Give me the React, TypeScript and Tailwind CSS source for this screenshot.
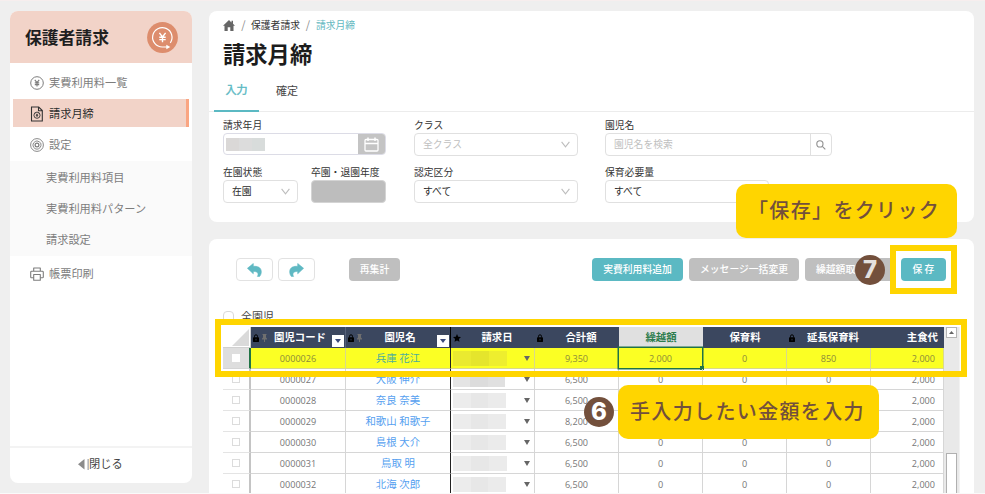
import type { ReactNode } from 'react';
import clsx from 'clsx';

interface Row {
  code: string;
  name: string;
  total: string;
  carry?: string;
  care?: string;
  extended?: string;
  mosaic: string[];
  mosaicWidth: string;
}

const GRAYS = ['bg-[#ececec]', 'bg-[#e7e7e7]', 'bg-[#ebebeb]'];

const ROWS: Row[] = [
  { code: '0000026', name: '兵庫 花江', total: '9,350', carry: '2,000', care: '0', extended: '850', mosaic: ['bg-[#eaea30]', 'bg-[#e5e52c]', 'bg-[#eeee2e]'], mosaicWidth: 'w-[54px]' },
  { code: '0000027', name: '大阪 伸介', total: '6,500', carry: '0', care: '0', extended: '0', mosaic: ['bg-[#e4e4e4]', 'bg-[#dcdcdc]', 'bg-[#e0e0e0]'], mosaicWidth: 'w-[52px]' },
  { code: '0000028', name: '奈良 奈美', total: '6,500', mosaic: GRAYS, mosaicWidth: 'w-[53px]' },
  { code: '0000029', name: '和歌山 和歌子', total: '8,200', mosaic: GRAYS, mosaicWidth: 'w-[53px]' },
  { code: '0000030', name: '島根 大介', total: '6,500', carry: '0', care: '0', extended: '0', mosaic: GRAYS, mosaicWidth: 'w-[53px]' },
  { code: '0000031', name: '鳥取 明', total: '6,500', carry: '0', care: '0', extended: '0', mosaic: GRAYS, mosaicWidth: 'w-[54px]' },
  { code: '0000032', name: '北海 次郎', total: '6,500', carry: '0', care: '0', extended: '0', mosaic: GRAYS, mosaicWidth: 'w-[53px]' },
];

const COLS = 'grid grid-cols-[28px_95px_105px_84px_84px_84px_84px_84px_73px]';

function YenIcon() {
  return (
    <svg width="14" height="14" viewBox="0 0 14 14" fill="none" stroke="#7d7d7d" strokeWidth="1">
      <circle cx="7" cy="7" r="6.3" />
      <path d="M4.8 3.8 7 6.7l2.2-2.9M7 6.7v3.8M4.8 6.9h4.4M4.8 8.6h4.4" strokeWidth="1.1" />
    </svg>
  );
}

function BillIcon() {
  return (
    <svg width="14" height="16" viewBox="0 0 14 16" fill="none" stroke="#333" strokeWidth="1.1">
      <path d="M1.5 1h7.2L12.3 4.6V15H1.5zM8.5 1v3.8h3.8" />
      <circle cx="7" cy="9.2" r="3.1" strokeWidth="0.9" />
      <path d="M5.8 7.5 7 9l1.2-1.5M7 9v2M5.8 9.6h2.4" strokeWidth="0.8" />
    </svg>
  );
}

function SettingIcon() {
  return (
    <svg width="14" height="14" viewBox="0 0 14 14" fill="none" stroke="#7d7d7d">
      <circle cx="7" cy="7" r="6.4" strokeWidth="0.9" />
      <path d="m7 2.9 2.2.9 1.6 1.4.2 2.3-.8 2-1.7 1.3L7 11.2l-1.9-.5-1.5-1.4L2.9 7l.7-2.1 1.6-1.4z" strokeWidth="0.9" />
      <circle cx="7" cy="7" r="1.9" strokeWidth="1.2" />
    </svg>
  );
}

function PrintIcon() {
  return (
    <svg width="14" height="14" viewBox="0 0 14 14" fill="none" stroke="#7d7d7d" strokeWidth="1.1" strokeLinejoin="round">
      <path d="M3.7 4.3V1h6.6v3.3M3.7 10.8H1.6a.9.9 0 0 1-.9-.9V5.2c0-.5.4-.9.9-.9h10.8c.5 0 .9.4.9.9v4.7c0 .5-.4.9-.9.9h-2.1" />
      <path d="M3.7 7.5h6.6v5.8H3.7z" />
    </svg>
  );
}

function HeaderLogo() {
  return (
    <svg width="31" height="31" viewBox="0 0 31 31" fill="none">
      <circle cx="15.5" cy="15.5" r="15.4" fill="#dd8d6d" />
      <path d="M20.5 25H15.300a9.700 9.700 0 1 1 8-4.200" stroke="#fff" strokeWidth="1.2" />
      <path d="m19.3 22.8 4 2.2-4 2.2z" fill="#fff" />
      <path d="M12.4 10.8 15.5 15l3.1-4.2M15.5 15v5.2M12.3 15.3h6.4M12.3 17.6h6.4" stroke="#fff" strokeWidth="1.4" />
    </svg>
  );
}

function LockIcon() {
  return (
    <svg width="6" height="8" viewBox="0 0 6 8" className="shrink-0">
      <path d="M1.5 3.5V2.3a1.5 1.5 0 0 1 3 0v1.2" fill="none" stroke="#000" strokeWidth="1" />
      <rect x="0" y="3.3" width="6" height="4.7" rx="0.4" fill="#000" />
      <rect x="2.6" y="4.8" width="0.8" height="1.6" fill="#3b475f" />
    </svg>
  );
}

function PinIcon() {
  return (
    <svg width="5" height="8" viewBox="0 0 5 8" className="shrink-0" fill="#6f6f6f">
      <path d="M.5 0h4v1h-.5v2.600l1 1v.9H3v2.500H2V5.500H0v-.9l1-1V1H.5z" />
    </svg>
  );
}

function Chevron() {
  return (
    <svg width="9" height="7" viewBox="0 0 9 7" fill="none" stroke="#bdbdbd" strokeWidth="1.1">
      <path d="M.6.8 4.5 5.8 8.4.8" />
    </svg>
  );
}

function UndoArrow({ flip }: { flip?: boolean }) {
  return (
    <svg width="15" height="14" viewBox="0 0 15 14" className={clsx('mt-px', flip && '-scale-x-100')}>
      <path
        d="M.4 5.3 6.3.5v2.800h1.500c4 0 6.500 2.100 6.500 5.500 0 1.800-.6 3.400-1.700 4.600h-2.200c.9-1.300.9-3.100-.2-4-.8-.7-2-.9-3.900-.9v2.300z"
        fill="#5fb9c3"
        stroke="#5fb9c3"
        strokeWidth="0.6"
        strokeLinejoin="round"
      />
    </svg>
  );
}

function NavItem({ icon, label }: { icon: ReactNode; label: string }) {
  return (
    <div className="flex h-[30px] items-center pl-5 text-[11.2px] text-[#7d7d7d]">
      <span className="flex w-[19px]">{icon}</span>
      {label}
    </div>
  );
}

function Sidebar() {
  return (
    <aside className="flex h-[472px] w-[182px] shrink-0 flex-col overflow-hidden rounded-lg bg-white">
      <div className="flex h-[52px] shrink-0 items-center justify-between bg-[#f2d3c8] pr-[14px] pl-[15px]">
        <span className="text-[16.8px] font-bold text-[#1f1f1f]">保護者請求</span>
        <HeaderLogo />
      </div>
      <nav className="flex grow flex-col pt-[5px]">
        <NavItem icon={<YenIcon />} label="実費利用料一覧" />
        <div className="mx-[3px] mt-px flex h-[28px] items-center border-r-[3px] border-[#faa582] bg-[#f2d3c8] pt-px pl-[17px] text-[11.2px] text-[#2c2c2c]">
          <span className="flex w-[19px]"><BillIcon /></span>
          請求月締
        </div>
        <div className="mt-[3px] mb-px">
          <NavItem icon={<SettingIcon />} label="設定" />
        </div>
        <div className="flex h-[95px] flex-col bg-[#fafafa] pt-px pl-9 text-[11.2px] text-[#7d7d7d]">
          <div className="flex h-[31px] items-center">実費利用料項目</div>
          <div className="flex h-[31px] items-center">実費利用料パターン</div>
          <div className="flex h-[31px] items-center">請求設定</div>
        </div>
        <div className="mt-[3px]">
          <NavItem icon={<PrintIcon />} label="帳票印刷" />
        </div>
      </nav>
      <div className="flex h-[37px] items-center border-t-2 border-[#f3f3f3] pb-[3px] pl-[68px] text-[11.2px] text-[#444]">
        <svg width="11" height="11" viewBox="0 0 11 11">
          <path d="M6.5 0v10.6L0 5.3z" fill="#8b8b8b" />
          <path d="M9.5 0h1.3v11H9.5z" fill="#a8a8a8" />
        </svg>
        閉じる
      </div>
    </aside>
  );
}

function Field({ label, className, children }: { label: string; className: string; children: ReactNode }) {
  return (
    <div className={clsx('flex shrink-0 flex-col', className)}>
      <div className="flex h-[15px] items-center text-[9.8px] whitespace-nowrap text-[#333]">{label}</div>
      {children}
    </div>
  );
}

function Select({ value, muted }: { value: string; muted?: boolean }) {
  return (
    <div className={clsx('flex h-[23px] items-center justify-between rounded border border-[#e0e0e0] pr-[7px] pl-2 text-[9.8px]', muted ? 'text-[#bfbfbf]' : 'text-[#2c2c2c]')}>
      <span>{value}</span>
      <Chevron />
    </div>
  );
}

function FilterCard() {
  return (
    <section className="h-[211px] shrink-0 rounded-lg bg-white">
      <div className="flex h-[28px] items-center pt-px pl-[14px] text-[9.8px]">
        <svg width="12" height="11" viewBox="0 0 12 11" fill="#666">
          <path d="M6 0 0 5.8h1.500V11h3.200V7.300h2.600V11h3.200V5.800H12l-2-2V.8H8.500v1.600z" />
        </svg>
        <span className="w-[17px] pb-[2px] text-center text-[11px] text-[#8c8c8c]">/</span>
        <span className="-ml-px text-[#333]">保護者請求</span>
        <span className="w-[16px] pb-[2px] text-center text-[11px] text-[#8c8c8c]">/</span>
        <span className="text-[#62b8bf]">請求月締</span>
      </div>
      <h1 className="flex h-[30px] items-center pb-[2px] pl-[14px] text-[22.3px] font-bold text-[#1c1c1c]">請求月締</h1>
      <div className="flex h-[43px] border-b border-[#ececec] pl-[5px] text-[11px]">
        <div className="flex h-[43px] w-[45px] items-center justify-center border-b-2 border-[#5bb9c3] text-[#5bb9c3] [-webkit-text-stroke:0.4px]">入力</div>
        <div className="flex h-[42px] w-[56px] items-center justify-center text-[#444]">確定</div>
      </div>

      <div className="flex pt-[6px] pl-[14px]">
        <Field label="請求年月" className="mr-7 w-[163px]">
          <div className="flex h-[22px] overflow-hidden rounded-sm border border-[#dcdce6]">
            <div className="flex grow items-center pl-[2px]">
              <span className="h-[13px] w-[13px] bg-[#dad8d7]" />
              <span className="h-[13px] w-[13px] bg-[#dcdcdc]" />
              <span className="h-[13px] w-[13px] bg-[#d8dcdb]" />
            </div>
            <div className="flex w-[27px] items-center justify-center bg-[#c4c4c4]">
              <svg width="15" height="15" viewBox="0 0 15 15" fill="none" stroke="#fff">
                <rect x="1" y="2.5" width="13" height="11.5" rx="1" strokeWidth="1.3" />
                <path d="M1 6.4h13M4 .5V4M11 .5V4" strokeWidth="1.5" />
              </svg>
            </div>
          </div>
        </Field>
        <Field label="クラス" className="mr-[27px] w-[164px]">
          <Select value="全クラス" muted />
        </Field>
        <Field label="園児名" className="w-[227px]">
          <div className="flex h-[23px] rounded border border-[#e0e0e0] text-[9.8px] text-[#bfbfbf]">
            <div className="flex grow items-center pl-2">園児名を検索</div>
            <div className="flex w-[21px] items-center justify-center border-l border-[#e0e0e0]">
              <svg width="10" height="10" viewBox="0 0 10 10" fill="none" stroke="#8f8f8f" strokeWidth="1.1">
                <circle cx="3.9" cy="3.9" r="3.1" />
                <path d="m6.3 6.3 3 3" />
              </svg>
            </div>
          </div>
        </Field>
      </div>

      <div className="flex pt-[9px] pl-[14px]">
        <Field label="在園状態" className="mr-[13px] w-[75px]">
          <Select value="在園" />
        </Field>
        <Field label="卒園・退園年度" className="mr-[28px] w-[75px]">
          <div className="h-[23px] rounded border border-[#d4d4d4] bg-[#bdbdbd]" />
        </Field>
        <Field label="認定区分" className="mr-[27px] w-[164px]">
          <Select value="すべて" />
        </Field>
        <Field label="保育必要量" className="w-[164px]">
          <Select value="すべて" />
        </Field>
      </div>
    </section>
  );
}

function ToolButton({ label, className }: { label: string; className: string }) {
  return (
    <div className={clsx('flex h-[23px] shrink-0 items-center rounded text-[9.8px] font-medium whitespace-nowrap text-white', className)}>
      {label}
    </div>
  );
}

function HeadCell({ label, lock, pin, star, filter, className }: { label: string; lock?: boolean; pin?: boolean; star?: boolean; filter?: boolean; className?: string }) {
  return (
    <div className={clsx('relative flex items-center', className ?? 'justify-center bg-[#3b475f] text-white')}>
      <span className="absolute top-[7px] left-[2px] flex gap-[3px]">
        {lock && <LockIcon />}
        {pin && <PinIcon />}
        {star && (
          <svg width="8" height="8" viewBox="0 0 10 10">
            <path d="m5 0 1.5 3.4 3.5.4-2.6 2.4.7 3.6L5 8 1.9 9.8l.7-3.6L0 3.8l3.5-.4z" />
          </svg>
        )}
      </span>
      {label}
      {filter && (
        <span className="absolute right-px bottom-px flex h-[12px] w-[12px] items-center justify-center bg-white">
          <svg width="6" height="4" viewBox="0 0 6 4"><path d="M0 0h6L3 4z" fill="#3b4a7a" /></svg>
        </span>
      )}
    </div>
  );
}

function GridRow({ row, active }: { row: Row; active: boolean }) {
  const cell = clsx('flex items-center border-r border-b', active ? 'border-[#d9d98c]' : 'border-[#d6d6d6]');
  return (
    <div className={clsx(COLS, 'h-[21px] font-["Open_Sans","Noto_Sans_CJK_JP",sans-serif] text-[9.1px]', active ? 'bg-[#fbff24] text-[#8c8c3a]' : 'bg-white text-[#777]')}>
      <div className={clsx('flex items-center justify-center border-b', active ? 'border-r-2 border-r-[#217346] border-b-[#d4d4d4] bg-[#dedede]' : 'border-r-2 border-r-[#c4c4c4] border-b-[#e4e4e4]')}>
        <span className={clsx('h-[8px] w-[8px] border bg-white', active ? 'border-white' : 'border-[#dcdcdc]')} />
      </div>
      <div className={clsx(cell, 'justify-center pt-px')}>{row.code}</div>
      <div className={clsx('flex items-center justify-center border-r border-b border-r-[#222] text-[10.4px]', active ? 'border-b-[#d9d98c] text-[#4fae9c]' : 'border-b-[#d6d6d6] text-[#569ff0]')}>
        {row.name}
      </div>
      <div className={clsx(cell, 'justify-between pr-[4px] pl-[2px]')}>
        <span className={clsx('flex h-[15px]', row.mosaicWidth)}>
          {row.mosaic.map((shade) => (
            <span key={shade} className={clsx('grow', shade)} />
          ))}
        </span>
        <svg width="6" height="5" viewBox="0 0 6 5"><path d="M0 0h6L3 5z" fill="#666" /></svg>
      </div>
      <div className={clsx(cell, 'justify-center pt-px')}>{row.total}</div>
      <div className={clsx(cell, 'relative justify-center pt-px')}>
        {row.carry}
        {active && (
          <>
            <span className="absolute -inset-px border border-[#217346] shadow-[0_0_0_0.5px_#217346]" />
            <span className="absolute -right-[2px] -bottom-[2px] h-[4px] w-[4px] bg-[#217346]" />
          </>
        )}
      </div>
      <div className={clsx(cell, 'justify-center pt-px')}>{row.care}</div>
      <div className={clsx(cell, 'justify-center pt-px')}>{row.extended}</div>
      <div className={clsx(cell, 'justify-end pt-px pr-[8px]')}>2,000</div>
    </div>
  );
}

function DataGrid() {
  return (
    <div className="flex h-[167px] pl-[14px]">
      <div className="w-[721px]">
        <div className={clsx(COLS, 'h-[21px] text-[10.4px] font-bold')}>
          <div className="flex items-end justify-end border-r border-b border-[#d0d0d0] bg-white">
            <svg width="18" height="18" viewBox="0 0 18 18"><path d="M17 0v17H0z" fill="#dadada" /></svg>
          </div>
          <HeadCell label="園児コード" lock pin filter className="justify-center border-r border-[#56617a] bg-[#3b475f] pl-[4px] text-white" />
          <HeadCell label="園児名" lock pin filter className="justify-center border-r border-black bg-[#3b475f] pl-[4px] text-white" />
          <HeadCell label="請求日" star className="justify-center bg-[#3b475f] pl-2 text-white" />
          <HeadCell label="合計額" lock className="justify-center bg-[#3b475f] pl-2 text-white" />
          <HeadCell label="繰越額" className="justify-center bg-[#e0e0e0] text-[#2e7d4f]" />
          <HeadCell label="保育料" />
          <HeadCell label="延長保育料" lock className="justify-center bg-[#3b475f] pl-2 text-white" />
          <HeadCell label="主食代" className="justify-end bg-[#3b475f] pr-[6px] text-white" />
        </div>
        {ROWS.map((row, i) => (
          <GridRow key={row.code} row={row} active={i === 0} />
        ))}
      </div>
      <div className="flex w-[16px] flex-col border-r border-[#f2f2f2] bg-[#e9e9e9] pl-[2px]">
        <div className="flex h-[11px] w-[11px] shrink-0 items-center justify-center border border-[#b5b5b5] bg-white">
          <svg width="5" height="3" viewBox="0 0 5 3"><path d="M0 3h5L2.5 0z" fill="#666" /></svg>
        </div>
        <div className="mt-[115px] w-[11px] grow border border-[#b0b0b0] bg-white" />
      </div>
    </div>
  );
}

function GridCard() {
  return (
    <section className="mt-[17px] h-[255px] shrink-0 rounded-t-lg bg-white">
      <div className="flex pt-[19px] pl-[27px]">
        <div className="mr-[5px] flex h-[23px] w-[37px] items-center justify-center rounded border border-[#e2e2e2]"><UndoArrow /></div>
        <div className="mr-[34px] flex h-[23px] w-[37px] items-center justify-center rounded border border-[#e2e2e2]"><UndoArrow flip /></div>
        <ToolButton label="再集計" className="mr-[192px] w-[51px] justify-center bg-[#bfbfbf]" />
        <ToolButton label="実費利用料追加" className="mr-[6px] w-[91px] justify-center bg-[#5bb9c3]" />
        <ToolButton label="メッセージ一括変更" className="mr-[6px] w-[110px] justify-center bg-[#bfbfbf]" />
        <ToolButton label="繰越額取" className="mr-[5px] w-[91px] bg-[#bfbfbf] pl-[11px]" />
        <ToolButton label="保 存" className="w-[45px] justify-center bg-[#5bb9c3]" />
      </div>
      <div className="flex h-[46px] items-end gap-[7px] pl-[14px]">
        <span className="mb-[4px] h-[12px] w-[11px] rounded-sm border border-[#d9d9d9]" />
        <span className="pb-[3px] text-[11px] leading-[16px] text-[#444]">全園児</span>
      </div>
      <DataGrid />
    </section>
  );
}

function StepBadge({ step, className }: { step: string; className: string }) {
  return (
    <div className={clsx('absolute flex h-[30px] w-[30px] items-center justify-center rounded-full bg-[#73503c] font-["Inter",sans-serif] text-[24px] leading-none font-extrabold', className)}>
      {step}
    </div>
  );
}

export default function App() {
  return (
    <div className="relative flex h-[494px] w-[985px] overflow-hidden bg-[#efefef] pt-[11px] pl-[10px] font-['Noto_Sans_CJK_JP',sans-serif] leading-none">
      <Sidebar />
      <main className="ml-[17px] flex w-[765px] flex-col">
        <FilterCard />
        <GridCard />
      </main>

      {/* Window edges */}
      <div className="absolute inset-x-0 top-0 h-px bg-[#f7eeee]" />
      <div className="absolute inset-x-0 bottom-0 h-px bg-[#fafafa]" />

      {/* Guide overlays */}
      <div className="absolute top-[319px] left-[215px] h-[58px] w-[752px] border-[6px] border-[#ffd500]" />
      <div className="absolute top-[245px] left-[890px] h-[49px] w-[67px] border-[6px] border-[#ffd500]" />
      <div className="absolute top-[184px] left-[736px] flex h-[54px] w-[221px] items-center rounded-[10px] bg-[#ffd500] pb-[2px] pl-[12px] text-[20px] font-medium tracking-[1.35px] whitespace-nowrap text-[#73503c]">
        「保存」をクリック
      </div>
      <div className="absolute top-[385px] left-[618px] flex h-[54px] w-[261px] items-center rounded-[10px] bg-[#ffd500] pb-[2px] pl-[12px] text-[20px] font-medium tracking-[1.35px] whitespace-nowrap text-[#73503c]">
        手入力したい金額を入力
      </div>
      <StepBadge step="7" className="top-[255px] left-[855px] text-[#e4e0de]" />
      <StepBadge step="6" className="top-[397px] left-[584px] text-white" />
    </div>
  );
}
